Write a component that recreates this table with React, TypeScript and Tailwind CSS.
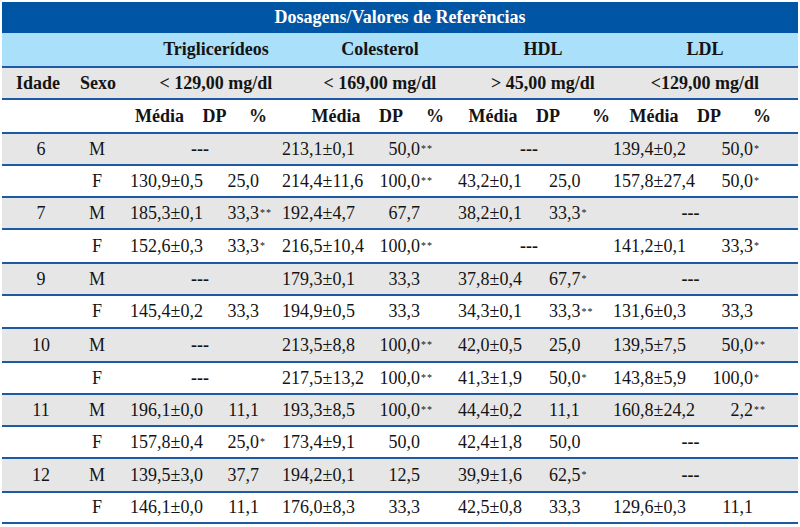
import React from 'react'

type Val = '---' | [string, string, string?]

interface Row {
  idade?: string
  sexo: 'M' | 'F'
  h: string
  cells: Val[]
}

// layout per lipid group: where the mean starts, where the % ends, where '---' sits
const groups = [
  { media: 'pl-[16px]', num: 'w-[49px] text-right', dash: 'pl-[8px]' },
  { media: 'pl-[4px]', num: 'w-[50px] text-right', dash: '' },
  { media: 'pl-[8px]', num: 'pl-[4px]', dash: 'pl-[3px]' },
  { media: 'pl-[8px]', num: 'w-[53px] text-right', dash: 'pr-[22px]' },
]

const rows: Row[] = [
  { idade: '6', sexo: 'M', h: 'h-[32px]', cells: ['---', ['213,1±0,1', '50,0', '**'], '---', ['139,4±0,2', '50,0', '*']] },
  { sexo: 'F', h: 'h-[32px]', cells: [['130,9±0,5', '25,0'], ['214,4±11,6', '100,0', '**'], ['43,2±0,1', '25,0'], ['157,8±27,4', '50,0', '*']] },
  { idade: '7', sexo: 'M', h: 'h-[32px]', cells: [['185,3±0,1', '33,3', '**'], ['192,4±4,7', '67,7'], ['38,2±0,1', '33,3', '*'], '---'] },
  { sexo: 'F', h: 'h-[34px]', cells: [['152,6±0,3', '33,3', '*'], ['216,5±10,4', '100,0', '**'], '---', ['141,2±0,1', '33,3', '*']] },
  { idade: '9', sexo: 'M', h: 'h-[32px]', cells: ['---', ['179,3±0,1', '33,3'], ['37,8±0,4', '67,7', '*'], '---'] },
  { sexo: 'F', h: 'h-[33px]', cells: [['145,4±0,2', '33,3'], ['194,9±0,5', '33,3'], ['34,3±0,1', '33,3', '**'], ['131,6±0,3', '33,3']] },
  { idade: '10', sexo: 'M', h: 'h-[34px]', cells: ['---', ['213,5±8,8', '100,0', '**'], ['42,0±0,5', '25,0'], ['139,5±7,5', '50,0', '**']] },
  { sexo: 'F', h: 'h-[32px]', cells: ['---', ['217,5±13,2', '100,0', '**'], ['41,3±1,9', '50,0', '*'], ['143,8±5,9', '100,0', '*']] },
  { idade: '11', sexo: 'M', h: 'h-[32px]', cells: [['196,1±0,0', '11,1'], ['193,3±8,5', '100,0', '**'], ['44,4±0,2', '11,1'], ['160,8±24,2', '2,2', '**']] },
  { sexo: 'F', h: 'h-[32px]', cells: [['157,8±0,4', '25,0', '*'], ['173,4±9,1', '50,0'], ['42,4±1,8', '50,0'], '---'] },
  { idade: '12', sexo: 'M', h: 'h-[34px]', cells: [['139,5±3,0', '37,7'], ['194,2±0,1', '12,5'], ['39,9±1,6', '62,5', '*'], '---'] },
  { sexo: 'F', h: 'h-[31px]', cells: [['146,1±0,0', '11,1'], ['176,0±8,3', '33,3'], ['42,5±0,8', '33,3'], ['129,6±0,3', '11,1']] },
]

const dataCols = 'grid grid-cols-[78px_34px_96px_68px_92px_80px_95px_60px_95px_98px]'
const groupCols = 'grid grid-cols-[72px_48px_188px_140px_186px_138px_1fr]'
const line = 'border-b-2 border-[#1d59a5]'

function Stars({ s }: { s?: string }) {
  if (!s) return null
  return <span className="ml-px text-[10px] leading-none tracking-[1px]">{s}</span>
}

function DataRow({ row }: { row: Row }) {
  const bg = row.sexo === 'M' ? 'bg-[#e6e6e6]' : 'bg-white'
  return (
    <div className={`${dataCols} ${row.h} ${bg} ${line} items-center text-[18px]`}>
      <div className="text-center">{row.idade ?? ''}</div>
      <div className="text-center">{row.sexo}</div>
      {row.cells.map((c, i) => {
        const g = groups[i]
        if (c === '---') {
          return (
            <div key={i} className={`col-span-2 text-center font-bold ${g.dash}`}>
              ---
            </div>
          )
        }
        return (
          <React.Fragment key={i}>
            <div className={`whitespace-nowrap ${g.media}`}>{c[0]}</div>
            <div className="flex items-center whitespace-nowrap">
              <span className={g.num}>{c[1]}</span>
              <Stars s={c[2]} />
            </div>
          </React.Fragment>
        )
      })}
    </div>
  )
}

export default function App() {
  return (
    <div className="w-[800px] h-[527px] bg-white p-[2px] [font-family:'Liberation_Serif','Times_New_Roman',serif] text-[#141414]">
      {/* Title */}
      <div className="h-[31px] bg-[#0055a5] flex items-center justify-center text-white font-bold text-[18px]">
        Dosagens/Valores de Referências
      </div>

      {/* Lipid names */}
      <div className={`${groupCols} h-[35px] bg-[#aae0fa] ${line} items-center font-bold text-[18px]`}>
        <div />
        <div />
        <div className="text-center">Triglicerídeos</div>
        <div className="text-center">Colesterol</div>
        <div className="text-center">HDL</div>
        <div className="text-center">LDL</div>
        <div />
      </div>

      {/* Reference values */}
      <div className={`${groupCols} h-[32px] bg-[#e6e6e6] ${line} items-center font-bold text-[18px]`}>
        <div className="text-center">Idade</div>
        <div className="text-center">Sexo</div>
        <div className="text-center">&lt; 129,00 mg/dl</div>
        <div className="text-center">&lt; 169,00 mg/dl</div>
        <div className="text-center">&gt; 45,00 mg/dl</div>
        <div className="text-center">&lt;129,00 mg/dl</div>
        <div />
      </div>

      {/* Sub headers */}
      <div className={`flex h-[34px] bg-white ${line} items-center font-bold text-[18px]`}>
        <span className="ml-[130.5px] w-[54px] text-center">Média</span>
        <span className="ml-[13px] w-[30px] text-center">DP</span>
        <span className="ml-[18.5px] w-[20px] text-center">%</span>
        <span className="ml-[41px] w-[54px] text-center">Média</span>
        <span className="ml-[13px] w-[30px] text-center">DP</span>
        <span className="ml-[19px] w-[20px] text-center">%</span>
        <span className="ml-[21px] w-[54px] text-center">Média</span>
        <span className="ml-[13px] w-[30px] text-center">DP</span>
        <span className="ml-[28px] w-[20px] text-center">%</span>
        <span className="ml-[16px] w-[54px] text-center">Média</span>
        <span className="ml-[13px] w-[30px] text-center">DP</span>
        <span className="ml-[28px] w-[20px] text-center">%</span>
      </div>

      {rows.map((r, i) => (
        <DataRow key={i} row={r} />
      ))}
    </div>
  )
}
